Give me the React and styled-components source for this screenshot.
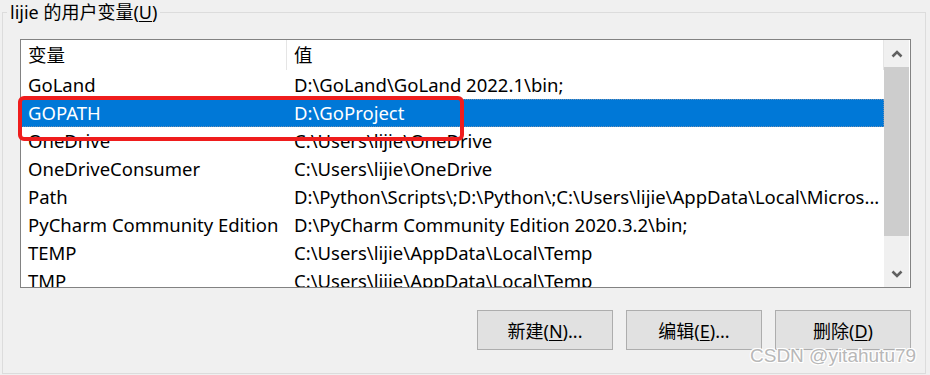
import React from 'react'
import styled, { createGlobalStyle } from 'styled-components'

const rows = [
  { name: 'GoLand', value: String.raw`D:\GoLand\GoLand 2022.1\bin;` },
  { name: 'GOPATH', value: String.raw`D:\GoProject`, selected: true },
  { name: 'OneDrive', value: String.raw`C:\Users\lijie\OneDrive` },
  { name: 'OneDriveConsumer', value: String.raw`C:\Users\lijie\OneDrive` },
  { name: 'Path', value: String.raw`D:\Python\Scripts\;D:\Python\;C:\Users\lijie\AppData\Local\Micros...` },
  { name: 'PyCharm Community Edition', value: String.raw`D:\PyCharm Community Edition 2020.3.2\bin;` },
  { name: 'TEMP', value: String.raw`C:\Users\lijie\AppData\Local\Temp` },
  { name: 'TMP', value: String.raw`C:\Users\lijie\AppData\Local\Temp` },
]

const GlobalStyle = createGlobalStyle`
  body {
    margin: 0;
    background: #f0f0f0;
    font-family: "Noto Sans", "Noto Sans CJK SC", sans-serif;
    font-size: 18px;
    color: #000;
  }
`

const Chevron = ({ down }) => (
  <svg width="12" height="8" viewBox="0 0 12 8">
    <path
      d={down ? 'M1.5 1.5 L6 6 L10.5 1.5' : 'M1.5 6.5 L6 2 L10.5 6.5'}
      fill="none"
      stroke="#606060"
      strokeWidth="2.6"
    />
  </svg>
)

const App = () => {
  return (
    <Page>
      <GlobalStyle />
      <GroupBox>
        <Title>lijie 的用户变量(<Accel>U</Accel>)</Title>
        <Body>
          <ListFrame>
            <ListInner>
              <Table>
                <Header>
                  <HeadCell>变量</HeadCell>
                  <HeadCell>值</HeadCell>
                </Header>
                {rows.map((row) => (
                  <Row key={row.name} $selected={row.selected}>
                    <Cell>{row.name}</Cell>
                    <Cell>{row.value}</Cell>
                  </Row>
                ))}
              </Table>
              <ScrollBar>
                <ArrowBox><Chevron /></ArrowBox>
                <Thumb />
                <Track />
                <ArrowBox><Chevron down /></ArrowBox>
              </ScrollBar>
            </ListInner>
            <Highlight />
          </ListFrame>
          <Buttons>
            <Button>新建(<Accel>N</Accel>)...</Button>
            <Button>编辑(<Accel>E</Accel>)...</Button>
            <Button>删除(<Accel>D</Accel>)</Button>
          </Buttons>
        </Body>
      </GroupBox>
      <Watermark>CSDN @yitahutu79</Watermark>
    </Page>
  )
}

const Page = styled.div`
  position: relative;
  width: 930px;
  height: 375px;
  padding-left: 2px;
  box-sizing: border-box;
  overflow: hidden;
`

const GroupBox = styled.fieldset`
  box-sizing: border-box;
  width: 924px;
  height: 374px;
  margin: 0;
  padding: 0;
  min-inline-size: 0;
  border: 1px solid #dcdcdc;
`

const Title = styled.legend`
  margin-left: 4px;
  padding: 0 3px;
  line-height: 24px;
  font-size: 18px;
  white-space: nowrap;
`

const Accel = styled.span`
  text-decoration: underline;
  text-underline-offset: 2px;
  text-decoration-thickness: 1px;
`

const Body = styled.div`
  padding: 15px 14px 0 17px;
`

const ListFrame = styled.div`
  position: relative;
  height: 249px;
  box-sizing: border-box;
  border: 1px solid #828282;
  background: #fff;
  font-size: 18.5px;
`

const ListInner = styled.div`
  display: flex;
  height: 100%;
  overflow: hidden;
`

const Table = styled.div`
  flex: 1;
  min-width: 0;
`

const Header = styled.div`
  display: grid;
  grid-template-columns: 266px 1fr;
  height: 31px;
  line-height: 30px;
`

const HeadCell = styled.div`
  padding-left: 7px;
  white-space: nowrap;
  border-right: 1px solid #e5e5e5;
  margin-bottom: 4px;
`

const Row = styled.div`
  display: grid;
  grid-template-columns: 266px 1fr;
  height: 28px;
  line-height: 28px;
  background: ${(p) => (p.$selected ? '#0078d7' : 'transparent')};
  color: ${(p) => (p.$selected ? '#fff' : '#000')};
  outline: ${(p) => (p.$selected ? '1px dotted #6d8fb3' : 'none')};
  outline-offset: -1px;
`

const Cell = styled.div`
  padding-left: 7px;
  white-space: nowrap;
  overflow: hidden;
  border-right: 1px solid transparent;
`

const ScrollBar = styled.div`
  width: 25px;
  margin-right: 1px;
  display: flex;
  flex-direction: column;
  background: #f0f0f0;
`

const ArrowBox = styled.div`
  height: 27px;
  display: flex;
  align-items: center;
  justify-content: center;
`

const Thumb = styled.div`
  height: 169px;
  background: #cdcdcd;
`

const Track = styled.div`
  flex: 1;
`

const Highlight = styled.div`
  position: absolute;
  left: -3px;
  top: 56px;
  width: 446px;
  height: 45px;
  box-sizing: border-box;
  border: 4px solid #ef1d1d;
  border-radius: 6px;
  pointer-events: none;
`

const Buttons = styled.div`
  display: flex;
  justify-content: flex-end;
  gap: 13px;
  margin-top: 22px;
`

const Button = styled.button`
  width: 136px;
  height: 40px;
  box-sizing: border-box;
  border: 1px solid #adadad;
  background: #e1e1e1;
  font-family: inherit;
  font-size: 18px;
  color: #000;
  padding: 0;
`

const Watermark = styled.div`
  position: absolute;
  left: 750px;
  top: 346px;
  font-family: "Liberation Sans", Arial, sans-serif;
  font-size: 19px;
  line-height: 19px;
  color: #b8b8b8;
  text-shadow: 1px 0 #fff, -1px 0 #fff, 0 1px #fff, 0 -1px #fff, 1px 1px #fff, -1px -1px #fff, 1px -1px #fff, -1px 1px #fff;
  white-space: nowrap;
  pointer-events: none;
`

export default App
